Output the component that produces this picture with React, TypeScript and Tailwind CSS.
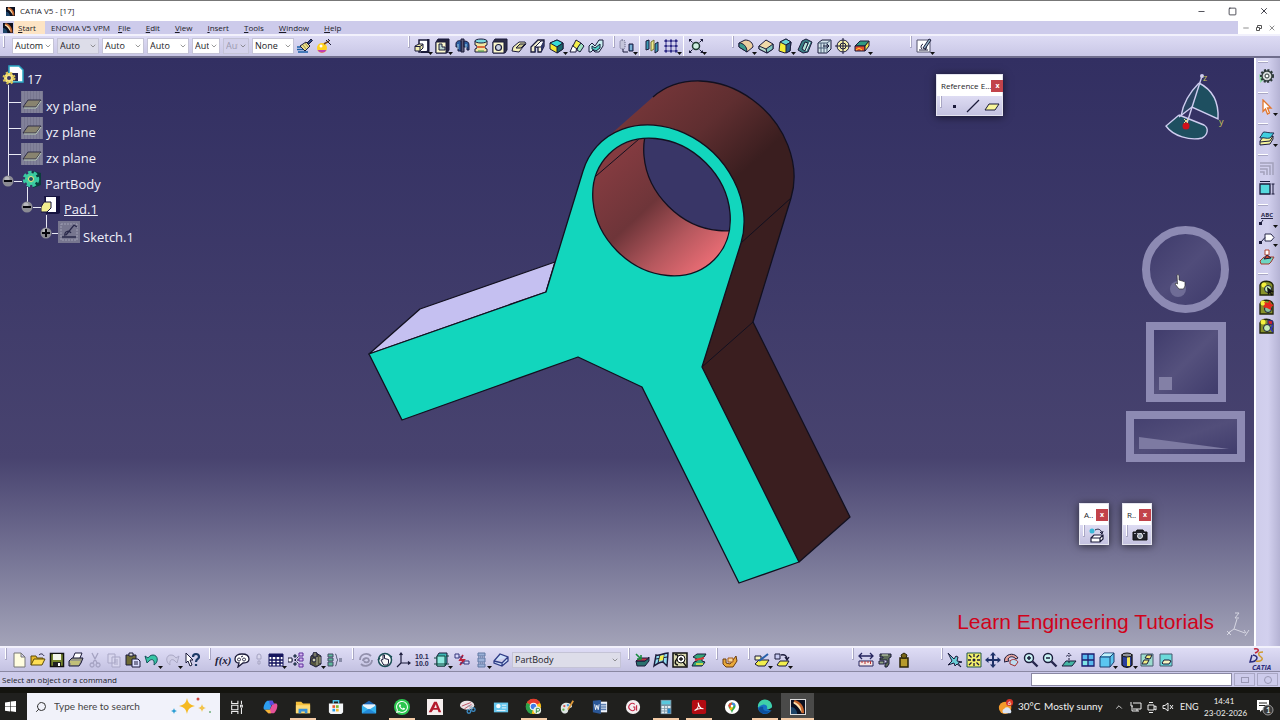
import type { ReactNode } from "react";
import { Minus, Square, X, Search, ChevronDown, ChevronUp } from "lucide-react";
import { SiWhatsapp } from "react-icons/si";

const K = "#1b1b3a";

// 16x16 glyphs for every toolbar
const GLYPHS: Record<string, ReactNode> = {
  brush: (
    <>
      <path d="M0 9h7M0 11.500h9M1 14h10" stroke="#1a5fa8" strokeWidth="1.300" />
      <path d="M3 8l6-4 4 4-5 5z" fill="#e9dd8b" stroke={K} />
      <path d="M6 7l3 4M8 5l3 4" stroke="#a39a4a" />
      <path d="M10 5l4-4 1.500 1.500L12 6z" fill="#2b4a86" stroke={K} />
    </>
  ),
  wizard: (
    <>
      <circle cx="6" cy="10" r="5" fill="#ffd21f" />
      <path d="M1.500 12a5 5 0 0 0 9 0z" fill="#c33fb0" />
      <circle cx="5" cy="8" r="1.500" fill="#fff" />
      <path d="M8 6l5-3" stroke="#7d4a1b" strokeWidth="1.500" />
      <path d="M10 2l5 5M12 1l2 2" stroke={K} />
    </>
  ),
  pad: (
    <>
      <path d="M5 2h9v11l-2 1H5z" fill="#fff" stroke={K} strokeWidth="1.500" />
      <path d="M13 2h1.500v12H7" stroke={K} strokeWidth="2" fill="none" />
      <path d="M1 8l4-2h4v4l-3 3H1z" fill="#f2efb0" stroke={K} />
      <path d="M6 9v4M1 8.500h5l3-2" stroke={K} fill="none" />
    </>
  ),
  pocket: (
    <>
      <path d="M2 4l2-3h11v11l-2 3H2z" fill="#23233f" stroke={K} />
      <path d="M2 4h10v11H2z" fill="#fbf8cc" stroke={K} />
      <path d="M5 6h3v3h3v3H5z" fill="#b9d4cf" stroke={K} />
    </>
  ),
  shaft: (
    <>
      <path d="M7 1h3v13H7z" fill="#5b5b78" stroke={K} />
      <path d="M2 6c0-3 3-4 5-3v10H4V9H2zM10 3c3 0 5 1 5 4v5h-2V9h-3z" fill="#2a5da0" stroke={K} />
      <path d="M4 6v5M12 6v4" stroke="#9fd4e9" />
    </>
  ),
  groove: (
    <>
      <path d="M2 3h12v4l-2 1v2l2 1v3H2v-3l2-1V8L2 7z" fill="#efe6a2" stroke={K} />
      <ellipse cx="8" cy="3" rx="6" ry="2" fill="#7ad8df" stroke={K} />
      <path d="M4 8h8v2H4z" fill="#d96b3e" />
      <path d="M5 13h6" stroke="#3a9a4a" />
    </>
  ),
  hole: (
    <>
      <path d="M1 4l2-3h12v11l-2 3H1z" fill="#2e2e46" stroke={K} />
      <path d="M1 4h11v11H1z" fill="#fbf8cc" stroke={K} />
      <circle cx="6.500" cy="9.500" r="3" fill="#ccd5e5" stroke={K} strokeWidth="1.200" />
    </>
  ),
  rib: (
    <>
      <path d="M1 13l1-4 6-5h6l1 2-3 3-4 5z" fill="#f3efb6" stroke={K} />
      <path d="M5 10l4-4h5l-4 4z" fill="#c9c58a" stroke={K} />
    </>
  ),
  slot: (
    <>
      <path d="M1 14V9l7-7h6v6l-3 6H8V9H5v5z" fill="#f3efd0" stroke={K} strokeWidth="1.300" />
      <path d="M5 9l6-6h3l-3 6H8z" fill="#fff" stroke={K} />
      <path d="M11 14V9l3-6v5zM5 14V9h1v5z" fill="#2d3568" />
    </>
  ),
  solid: (
    <>
      <path d="M1 5l7-3 6 3v6l-6 4-7-4z" fill="#f5e830" stroke={K} />
      <path d="M1 5l7-3 6 3-6 4z" fill="#37dcd7" stroke={K} />
      <path d="M8 9l6-4v6l-6 4z" fill="#17656b" stroke={K} />
    </>
  ),
  loft: (
    <>
      <path d="M1 14l3-7h4l-1 7z" fill="#fff" stroke={K} />
      <path d="M4 8l3-6 5 3-4 6z" fill="#f2ee4a" stroke={K} />
      <path d="M9 9l3-4 3 3-4 6-3-2z" fill="#9fe0c0" stroke={K} />
    </>
  ),
  loftCut: (
    <>
      <path d="M1 14V8l3-3 3 3 4-6h4v6l-4 6H7l-2-2-2 2z" fill="#c8eef0" stroke={K} />
      <path d="M4 8l3 2 5-4v4l-4 3-4-2z" fill="#4fd0c4" stroke={K} />
    </>
  ),
  translate: (
    <>
      <rect x="1" y="2" width="5" height="9" rx="2" fill="#c4c4da" stroke="#555577" strokeDasharray="1 1" />
      <path d="M4 11v3h5" stroke={K} fill="none" />
      <path d="M10 6h4v7h-4z" fill="#4b83b8" stroke={K} />
      <path d="M12 7v5" stroke="#a8dcec" />
    </>
  ),
  mirror: (
    <>
      <path d="M2 3l3-1v9l-3 1zM11 6l3-2v9l-3 2z" fill="#3b9ab5" stroke={K} />
      <path d="M7 4l3-2v9l-3 2z" fill="#ede98c" stroke="#777733" />
    </>
  ),
  pattern: (
    <>
      <path d="M3 1v14M8 1v14M13 1v14M1 3h14M1 8h14M1 13h14" stroke="#2f2b86" fill="none" />
      <path d="M2 2h2v2H2zM7 2h2v2H7zM12 2h2v2h-2zM2 7h2v2H2zM7 7h2v2H7zM12 7h2v2h-2zM2 12h2v2H2zM7 12h2v2H7zM12 12h2v2h-2z" fill="#2f2b86" />
    </>
  ),
  scale: (
    <>
      <circle cx="8" cy="8" r="3.500" fill="#cdeee0" stroke="#1b3a2f" strokeWidth="1.500" />
      <path d="M2 2l2.500 2.500M14 2l-2.500 2.500M2 14l2.500-2.500M14 14l-2.500-2.500" stroke={K} />
      <path d="M1 1h3L1 4zM15 1h-3l3 3zM1 15h3l-3-3zM15 15h-3l3-3z" fill={K} />
    </>
  ),
  fillet: (
    <>
      <path d="M1 5l6-3c5 0 8 3 8 7l-6 5-8-5z" fill="#edcfa0" stroke={K} />
      <path d="M1 5c4 0 8 3 8 9l-8-5z" fill="#3d9a8c" stroke={K} />
    </>
  ),
  chamfer: (
    <>
      <path d="M1 8l7-6 7 4v5l-6 4-8-4z" fill="#f0d9a8" stroke={K} />
      <path d="M8 11l7-5v5l-6 4z" fill="#7fc7c0" stroke={K} />
      <path d="M1 8l7 3 1 4-8-4z" fill="#b9dcc9" stroke={K} />
    </>
  ),
  draft: (
    <>
      <path d="M3 4l6-3 5 3-1 9-5 2-6-2z" fill="#f4ee35" stroke={K} />
      <path d="M3 4l6-3 5 3-5 3z" fill="#68d6d4" stroke={K} />
      <path d="M9 7l5-3-1 9-4 2z" fill="#2b5f8a" stroke={K} />
    </>
  ),
  shell: (
    <>
      <path d="M1 12l4-9 4-2 6 3-4 10-5 1z" fill="#3a7d83" stroke={K} />
      <path d="M5 11l3-7 3 1-3 8z" fill="#b2e2d6" stroke={K} />
      <path d="M9 13l4-9" stroke="#fff" />
    </>
  ),
  thickness: (
    <>
      <path d="M2 5l4-3h9v9l-4 4H2z" fill="#d3e3ea" stroke={K} />
      <path d="M2 5h9v10M11 5l4-3M5 5v10M8 5v10M2 10h9" stroke="#4a5f78" fill="none" />
      <path d="M7 8h6M11 6l2 2-2 2" stroke={K} fill="none" />
    </>
  ),
  thread: (
    <>
      <circle cx="8" cy="8" r="6" fill="#f5efaa" stroke={K} />
      <circle cx="8" cy="8" r="3" fill="none" stroke={K} />
      <path d="M8 0v16M0 8h16" stroke={K} />
    </>
  ),
  replace: (
    <>
      <path d="M1 8l5-5h9l-4 5z" fill="#2f9b82" stroke={K} />
      <path d="M1 8h10v5H1z" fill="#e8512a" stroke={K} />
      <path d="M11 8l4-5v5l-4 5z" fill="#f1e04c" stroke={K} />
      <path d="M2 12l3-2 3 2" stroke="#ffd83a" fill="none" />
    </>
  ),
  sketch: (
    <>
      <path d="M1 2h13v12H1z" fill="#fff" stroke="#55556e" />
      <path d="M3 12h9M6 11a3 3 0 0 1 1-5M10 8a3 3 0 0 1-1 4" stroke={K} fill="none" />
      <path d="M7 10l6-9 2 1-6 9z" fill="#96b6c8" stroke={K} />
    </>
  ),
  newFile: <path d="M3 1h7l4 4v10H3zM10 1v4h4" fill="#fffde0" stroke="#777" />,
  open: (
    <>
      <path d="M1 13V4h5l1 2h6v2" fill="#e9b928" stroke="#5c4b08" />
      <path d="M1 13l3-6h11l-3 6z" fill="#ffdf55" stroke="#5c4b08" />
      <path d="M9 3c2-2 4-1 5 1" stroke={K} fill="none" />
    </>
  ),
  save: (
    <>
      <path d="M1.500 1.500h13v13h-13z" fill="#76862d" stroke="#111" strokeWidth="1.500" />
      <path d="M4 2h8v6H4z" fill="#f4f5ea" />
      <path d="M4 10h8v4H4z" fill="#222" />
      <path d="M9 11h2v3H9z" fill="#fff" />
    </>
  ),
  print: (
    <>
      <path d="M5 6l2-5h7l-2 5" fill="#fff" stroke={K} />
      <path d="M1 9l3-3h11l-2 5-2 3H1z" fill="#9a9a86" stroke={K} />
      <path d="M2 10h10M3 12h8" stroke="#e8e46d" />
    </>
  ),
  cut: <path d="M5 1l5 10M11 1L6 11M5 11a2 2 0 1 0 .1 0M11 11a2 2 0 1 0 .1 0" stroke="#a5a3c2" strokeWidth="1.300" fill="none" />,
  copy: <path d="M2 2h7v9H2zM6 5h8v10H6zM8 8h4M8 10h4M8 12h4" stroke="#a9a7c6" fill="#d8d6ee" />,
  paste: (
    <>
      <path d="M1 3h10v10H1z" fill="#6d6a34" stroke={K} />
      <path d="M4 1h4v3H4z" fill="#ddd" stroke={K} />
      <path d="M7 7h6l2 2v6H7z" fill="#dce0ff" stroke={K} />
      <path d="M9 10h4M9 12h4" stroke={K} />
    </>
  ),
  undo: <path d="M1 4l2 7 2-2c3-3 6-1 5 4 5-3 4-10-1-10-3 0-4 2-5 3z" fill="#35c4a4" stroke="#14535b" />,
  redo: <path d="M15 4l-2 7-2-2c-3-3-6-1-5 4-5-3-4-10 1-10 3 0 4 2 5 3z" fill="#cfcde6" stroke="#aaa8c5" />,
  help: (
    <>
      <path d="M2 1l7 7H6l2 5-2 1-2-5-2 2z" fill="#fff" stroke={K} />
      <path d="M9 5c0-4 6-4 6 0 0 2-3 2-3 5M12 12v2" stroke="#1d3a66" strokeWidth="2.200" fill="none" />
    </>
  ),
  comment: (
    <>
      <path d="M8 2c5 0 7 2 7 5s-3 4-6 4l-5 4 1-4C2 11 1 9 1 7c0-3 3-5 7-5z" fill="#fff" stroke={K} strokeWidth="1.300" />
      <path d="M5 6a1.500 1.500 0 1 0 .1 0M10 6a1.500 1.500 0 1 0 .1 0M7 5l2-1" stroke={K} fill="none" />
    </>
  ),
  lock: <path d="M6 4a2 2 0 1 1 4 0v3H6zM7 9h2v3H7z" fill="#d9d7ee" stroke="#a5a3c2" />,
  table: (
    <>
      <path d="M1 2h14v12H1z" fill="#fff" stroke="#15155e" />
      <path d="M1 2h14v3H1z" fill="#15155e" />
      <path d="M1 8h14M1 11h14M4 5v9M8 5v9M12 5v9" stroke="#15155e" strokeWidth="1.400" />
    </>
  ),
  graph: (
    <>
      <path d="M3 8h8M7 8l5-5M7 8l5 5" stroke={K} fill="none" strokeDasharray="2 1" />
      <path d="M0 6h4v4H0z" fill="#fff" stroke={K} />
      <path d="M11 1h4v3h-4zM11 6h4v3h-4zM11 12h4v3h-4z" fill="#d9b9f3" stroke="#5d2c9a" />
      <path d="M6 3h2v2H6zM6 11h2v2H6z" fill="#4fb0a0" stroke={K} />
    </>
  ),
  law: (
    <>
      <path d="M4 4l5-3 5 3v8l-5 3-6-3z" fill="#55553f" stroke={K} />
      <path d="M6 2a2 2 0 0 1 4 0v3H6z" fill="#777766" stroke={K} />
      <circle cx="7" cy="8" r="2" fill="#cfcfb0" stroke={K} />
      <path d="M10 5v8M13 5v6" stroke="#b0b096" />
    </>
  ),
  brace: (
    <>
      <path d="M1 2h5v3H1zM1 6h5v3H1zM1 10h5v4H1z" fill="#5fb79c" stroke="#444c66" />
      <path d="M8 2c2 0 1 5 3 6-2 1-1 6-3 6M12 7h3M12 9h3" stroke="#444c66" fill="none" />
    </>
  ),
  update: <path d="M13 4C9 0 2 2 2 8M3 12c4 4 11 1 11-4M5 9c0-3 5-4 6-1M11 8c0 3-4 3-5 1" stroke="#9391ad" strokeWidth="1.800" fill="none" />,
  manual: (
    <>
      <circle cx="8" cy="8" r="6.500" fill="#fff" stroke="#1a4f55" strokeWidth="1.500" />
      <path d="M6 12l-2-4 2-.5V3h1.500v3.500l4 1V11l-1 2H7z" fill="#f8f8f8" stroke={K} />
      <path d="M1 8l2-2M13 4l2 1" stroke="#1a4f55" strokeWidth="1.500" />
    </>
  ),
  axis: <path d="M5 1v10h9M5 11l-4 4M3.500 3L5 1l1.500 2M12 9.500l2 1.500-2 1.500" stroke={K} strokeWidth="1.200" fill="none" />,
  body: (
    <>
      <path d="M3 4l2-3h8v10l-2 3H3z" fill="#3cb6b3" stroke={K} />
      <path d="M3 4h8v10H3z" fill="#8eeadf" stroke="#11453f" />
      <path d="M0 6h3M0 12h15M12 4h3" stroke="#11453f" />
    </>
  ),
  link: (
    <>
      <path d="M1 2h4v4H1zM10 9h5v3h-5z" fill="#d6d8fb" stroke="#34347a" />
      <path d="M9 3L6 8h4l-4 5" stroke="#c0203a" strokeWidth="1.800" fill="none" />
      <path d="M5 5h4M6 11h4" stroke="#34347a" />
    </>
  ),
  stack: (
    <>
      <path d="M5 1h7v3H5zM5 6h7v4H5zM5 12h7v3H5z" fill="#9ab0d7" stroke="#6178a3" />
      <path d="M5 5h7M5 11h7" stroke="#6178a3" strokeDasharray="1 1" />
    </>
  ),
  box: <path d="M1 9l6-7 8 3v4l-6 5-8-3zM1 9l8 2 6-6M9 11v3" fill="#cfe0fa" stroke="#2f3c86" strokeWidth="1.300" />,
  analysis: (
    <>
      <path d="M2 9h9l4-4v4l-4 5H3z" fill="#29706d" stroke={K} />
      <path d="M2 9l4-3h9l-4 3z" fill="#c2344a" stroke={K} />
      <path d="M2 2l5 5M7 3v4H3" stroke="#188a3f" strokeWidth="1.600" fill="none" />
    </>
  ),
  surface: (
    <>
      <path d="M3 3c3 1 5-1 12-2l-1 13-4-4c-3 0-5 1-9 4z" fill="#8fdcf0" stroke={K} strokeWidth="1.400" />
      <path d="M7 3l-2 8M11 2l-1 8M3 7l11-2" stroke={K} fill="none" />
      <path d="M7 4l4-1-1 5-4 1z" fill="#f2ee4a" />
    </>
  ),
  inspect: (
    <>
      <path d="M1 1h14v14H1z" fill="#d9d9ae" stroke="#111" strokeWidth="1.500" />
      <path d="M3 3c2-2 4 2 2 4s-3 5 1 6" stroke="#111" fill="none" strokeWidth="1.500" />
      <circle cx="9" cy="7" r="4" fill="#fff" stroke="#111" />
      <path d="M7 7h4M9 5v4M11 10l3 4" stroke="#111" strokeWidth="1.300" />
    </>
  ),
  curvature: (
    <>
      <path d="M2 5l4-3h9l-2 3-2 1v3l3 1-3 4H1l2-4 3-1V7z" fill="#31a57a" stroke={K} />
      <path d="M4 8l9-2" stroke="#d83d38" strokeWidth="2" />
      <path d="M5 12h7" stroke="#f6ec43" strokeWidth="1.500" />
    </>
  ),
  catalog: (
    <>
      <path d="M1 7h3v4l4 1 6-8 1 5-4 6H4l-3-3z" fill="#e9a93a" stroke="#6b3d10" />
      <path d="M6 6h5v4H6z" fill="#f6d79a" stroke="#a65b19" />
    </>
  ),
  planes: (
    <>
      <path d="M1 12l4-4h10l-4 6H4z" fill="#f2ee4e" stroke={K} />
      <path d="M1 4h6v4H1z" fill="#f8f6b4" stroke={K} />
      <path d="M5 9l9-7" stroke="#2860aa" strokeWidth="2" />
    </>
  ),
  planesArrow: (
    <>
      <path d="M3 13l3-4h9l-3 5H5z" fill="#f2ee4e" stroke={K} />
      <path d="M1 2h5v5H1z" fill="#c9ccf3" stroke={K} />
      <path d="M7 3c4-1 6 1 6 4M11 5l2 3 2-3" stroke={K} fill="none" strokeWidth="1.300" />
    </>
  ),
  measure: (
    <>
      <path d="M1 4h14M4 1L1 4l3 3M12 1l3 3-3 3" stroke="#25255e" fill="none" strokeWidth="1.300" />
      <path d="M1 9h14v5H1z" fill="#f9e6e2" stroke="#25255e" />
      <path d="M4 9v2M7 9v3M10 9v2M12.500 9v3" stroke="#b33" />
    </>
  ),
  caliper: (
    <>
      <path d="M3 2h11v3l-2 1v6l-2 3H8v-4h2V8H3V6h3V5H3z" fill="#5d6c58" stroke={K} />
      <path d="M2 9h5v3H2z" fill="#8ea284" stroke={K} />
      <path d="M5 3h6" stroke="#d6e2c1" />
    </>
  ),
  weight: (
    <>
      <path d="M4 6h8v9H4z" fill="#b79b2d" stroke="#2b2509" strokeWidth="1.500" />
      <path d="M6 6l-1-3 3-2 3 2-1 3z" fill="#776517" stroke="#2b2509" />
    </>
  ),
  fly: <path d="M1 1l6 6 2-3 2 1-1 4 5 1-4 1 3 4-4-3-2 2-1-3-6 2 4-4z" fill="#69cdd6" stroke={K} />,
  fit: (
    <>
      <path d="M1 1h14v14H1z" fill="#f3f06a" stroke="#20564c" />
      <circle cx="8" cy="8" r="1.500" fill={K} />
      <path d="M3 3l2.500 2.500M13 3l-2.500 2.500M3 13l2.500-2.500M13 13l-2.500-2.500M8 2v3M8 11v3M2 8h3M11 8h3" stroke={K} strokeWidth="1.300" />
    </>
  ),
  pan: <path d="M8 0l3 3.500H9V7h3.500V5L16 8l-3.500 3V9H9v3.500h2L8 16l-3-3.500h2V9H3.500v2L0 8l3.500-3v2H7V3.500H5z" fill="#1e3168" />,
  rotate: (
    <>
      <path d="M1 6c3-5 10-5 13 0l-2 1c-3-3-6-3-8 0l1 2-5 1z" fill="#e5a39b" stroke={K} />
      <path d="M6 9c3-3 7-1 8 1l-3 4-5-2z" fill="#bcdcf0" stroke="#a03030" />
    </>
  ),
  zoomIn: (
    <>
      <circle cx="6" cy="6" r="4.500" fill="#c8f3f3" stroke={K} strokeWidth="1.400" />
      <path d="M4 6h4M6 4v4" stroke={K} strokeWidth="1.500" />
      <path d="M9.500 9.500l5 5" stroke="#26264e" strokeWidth="2.400" />
    </>
  ),
  zoomOut: (
    <>
      <circle cx="6" cy="6" r="4.500" fill="#c8f3f3" stroke={K} strokeWidth="1.400" />
      <path d="M4 6h4" stroke={K} strokeWidth="1.500" />
      <path d="M9.500 9.500l5 5" stroke="#26264e" strokeWidth="2.400" />
    </>
  ),
  normal: (
    <>
      <path d="M1 14l4-5h10l-4 5z" fill="#45b6a4" stroke={K} />
      <path d="M8 11V2M5.500 4.500L8 1l2.500 3.500" stroke={K} fill="none" strokeDasharray="2 1" />
    </>
  ),
  multi: (
    <>
      <path d="M2 2h12v12H2z" fill="#58b9ef" stroke="#1d1d6e" strokeWidth="1.300" />
      <path d="M3 8h5v5H3z" fill="#7fe6e6" />
      <path d="M8 2v12M2 8h12" stroke="#1d1d6e" strokeWidth="1.300" />
    </>
  ),
  iso: (
    <>
      <path d="M1 5l4-4h10v9l-4 5H1z" fill="#5bc6f0" stroke="#1d3c6e" />
      <path d="M1 5h10v10M11 5l4-4" stroke="#1d3c6e" fill="none" />
      <path d="M2 4l3-2.500h9L11 4z" fill="#c5f2fa" />
    </>
  ),
  shading: (
    <>
      <path d="M3 3v10c2 3 8 3 10 0V3z" fill="#2b3f9d" stroke="#111" strokeWidth="1.300" />
      <path d="M8 5h3v9H8z" fill="#f3e75a" />
      <ellipse cx="8" cy="3" rx="5" ry="2" fill="#92949c" stroke="#111" />
    </>
  ),
  hide: (
    <>
      <path d="M2 2h12v12H2z" fill="#9cdccf" stroke="#46566c" />
      <path d="M3 12l2-4h5l-2 4zM6 6l2-3h5l-2 4z" fill="#f1ee83" stroke={K} />
    </>
  ),
  swap: (
    <>
      <path d="M2 2h12v12H2z" fill="#6bdada" stroke="#46566c" />
      <path d="M4 11l2-3h5l2 1-2 3H5z" fill="#f5f3c0" stroke={K} />
    </>
  ),
  gear: (
    <>
      <path d="M0 6l6 5-5 4z" fill="#8fdca6" />
      <circle cx="8" cy="8" r="6" fill="none" stroke="#2c3838" strokeWidth="2" strokeDasharray="2 1.500" />
      <circle cx="8" cy="8" r="5" fill="#d5d9d9" stroke="#2c3838" strokeWidth="1.300" />
      <circle cx="8" cy="8" r="2" fill="#fff" stroke="#2c3838" />
    </>
  ),
  arrow: <path d="M4 1l8 8H8.500l2 5-2 1-2-5L4 12.500z" fill="#fff" stroke="#e2762c" strokeWidth="1.300" />,
  layers: (
    <>
      <path d="M1 11l3-4 10-1v3l-3 5-10 1z" fill="#f4f29a" stroke={K} />
      <path d="M1 12l10-1 3-5" stroke={K} fill="none" />
      <path d="M1 7c2-1 2-5 4-5s5 1 10 1l-4 5c-4 1-6-1-10 0z" fill="#3fcfe0" stroke="#235" />
    </>
  ),
  dimGrey: <path d="M1 2h13v12M1 5h10v9M1 8h7v6M1 11h4v3" stroke="#a3a1ba" strokeWidth="1.500" fill="none" />,
  dim: (
    <>
      <path d="M1 4h10v10H1z" fill="#55d8dd" stroke={K} strokeWidth="1.300" />
      <path d="M1 1.500h10M14 4v10M12.500 4h3M12.500 14h3" stroke={K} />
    </>
  ),
  flag: (
    <>
      <path d="M6 4h6l3 3.500-3 3.500H6z" fill="#fff" stroke="#28284a" />
      <path d="M6 7.500L2 12" stroke={K} />
      <path d="M0 11h3v3H0z" fill={K} />
    </>
  ),
  stamp: (
    <>
      <path d="M1 12l4-4h10l-3 5-2 2H2z" fill="#6ed5c2" stroke="#a43a2b" />
      <path d="M6 1h4v5H6z" fill="#fff" stroke="#b0432f" />
      <path d="M5 10l3-4 4 3z" fill="#d0492f" stroke={K} />
    </>
  ),
  apply1: (
    <>
      <path d="M1 5c2-5 11-5 13 0v10H1z" fill="#87932a" stroke="#22260a" strokeWidth="1.400" />
      <circle cx="5" cy="5" r="2.500" fill="#f5f13d" />
      <circle cx="9" cy="9" r="3.500" fill="#c4edb8" stroke={K} />
      <path d="M8 7l7 5-3 .5L14 15l-2 .5-1-2.500-2 2z" fill="#111" />
    </>
  ),
  apply2: (
    <>
      <path d="M1 5c2-5 11-5 13 0v10H1z" fill="#87932a" stroke="#22260a" strokeWidth="1.400" />
      <circle cx="4" cy="4" r="2.500" fill="#f5f13d" />
      <circle cx="9" cy="10" r="3.500" fill="#8ac29c" stroke={K} />
      <path d="M4 8l2-3-1-2 4 1 2-3 1 4 3 1-3 2v3l-4-2z" fill="#e3281f" />
    </>
  ),
  apply3: (
    <>
      <path d="M1 5c2-5 11-5 13 0v10H1z" fill="#87932a" stroke="#22260a" strokeWidth="1.400" />
      <circle cx="4" cy="4" r="2.500" fill="#f5f13d" />
      <circle cx="8" cy="10" r="3.500" fill="#c4edb8" stroke={K} />
      <path d="M9 2l5 1-1 4-4-1z" fill="#c8242c" stroke="#222a80" />
      <path d="M14 7l-2 4 2 3" stroke="#3236b0" strokeWidth="1.800" />
    </>
  ),
  point: <path d="M7 7h3v3H7z" fill={K} />,
  line: <path d="M2 14L14 2" stroke={K} strokeWidth="1.300" />,
  plane: <path d="M1 12l4-6h10l-4 6z" fill="#f8f59a" stroke={K} />,
  axisBox: (
    <>
      <circle cx="3" cy="4" r="2.500" fill="#39b8d8" />
      <path d="M6 3c4-2 6 0 7 3M11 5l2 2 1-3" stroke={K} fill="none" />
      <path d="M2 11l3-3h9v4l-3 3H2zM2 11h9v4M11 11l3-3" fill="#fff" stroke={K} strokeWidth="1.200" />
    </>
  ),
  camera: (
    <>
      <path d="M1 5h3l1-2h6l1 2h3v8H1z" fill="#20222a" stroke="#111" />
      <path d="M2 6.500h12" stroke="#aab" strokeDasharray="2 1" />
      <circle cx="8" cy="9" r="2.500" fill="#8f9baa" stroke="#eee" />
    </>
  ),
};

function Glyph({ name }: { name: string }) {
  return (
    <svg viewBox="0 0 16 16" className="block h-4 w-4 shrink-0" fill="none">
      {GLYPHS[name]}
    </svg>
  );
}

const NARROW = ["comment", "lock"];

// names ending with "+" carry a drop-down marker
function Tool({ id }: { id: string }) {
  const drop = id.endsWith("+");
  const name = drop ? id.slice(0, -1) : id;
  const width = drop ? "w-5" : NARROW.includes(name) ? "w-[17px]" : "w-[19px]";
  return (
    <button aria-label={name} className={`relative flex h-4 shrink-0 ${width}`}>
      {name === "fx" && <span className="font-['Liberation_Serif',serif] text-[11px] leading-4 font-bold text-[#1b1b3a] italic">f(x)</span>}
      {name === "num" && (
        <span className="pt-px font-['Liberation_Sans',sans-serif] text-[7px] leading-[7px] font-bold text-[#26264e]">
          10.1
          <br />
          10.0
        </span>
      )}
      {GLYPHS[name] && <Glyph name={name} />}
      {drop && <DropMark />}
    </button>
  );
}

function DropMark() {
  return (
    <svg viewBox="0 0 5 3" className="absolute right-px -bottom-px h-[3px] w-[5px]">
      <path d="M0 0h5L2.500 3z" fill="#111" />
    </svg>
  );
}

function Tools({ ids }: { ids: string }) {
  return (
    <div className="flex shrink-0">
      {ids.split(" ").map((id) => (
        <Tool key={id} id={id} />
      ))}
    </div>
  );
}

function Handle() {
  return <div className="mr-1 h-3 w-[2px] shrink-0 self-start border-r border-b border-[#a9a7c4] bg-white" />;
}

function Divider() {
  return <div className="mr-1 h-full w-px shrink-0 bg-white" />;
}

function Picker({ label, value, className }: { label: string; value: string; className: string }) {
  return (
    <div className={`relative h-4 shrink-0 ${className}`}>
      <select aria-label={label} className="block h-full w-full appearance-none overflow-hidden border border-[#c4c3d6] bg-inherit pr-[10px] pl-[2px] text-[9px] leading-3">
        <option>{value}</option>
      </select>
      <ChevronDown className="pointer-events-none absolute top-1 right-[2px] h-2 w-2 text-[#666]" />
    </div>
  );
}

const MENU = ["File", "Edit", "View", "Insert", "Tools", "Window", "Help"];

function AppLogo({ className }: { className: string }) {
  return (
    <svg viewBox="0 0 16 16" className={className}>
      <rect width="16" height="16" fill="#0b1020" />
      <path d="M4 0c7 2 11 7 11 15h-3C11 9 8 5 3 3z" fill="#c4642c" />
      <path d="M3 2c6 2 9 6 9 12C9 9 7 6 3 4z" fill="#ffe2ae" />
      <path d="M0 8c4 0 7 4 7 8H0z" fill="#1d4468" />
    </svg>
  );
}

function Model() {
  return (
    <svg viewBox="0 58 1254 588" className="absolute inset-0 h-full w-full" fill="none">
      <defs>
        <linearGradient id="outer" gradientUnits="userSpaceOnUse" x1="640" y1="95" x2="740" y2="205">
          <stop offset="0" stopColor="#763639" />
          <stop offset="0.450" stopColor="#5f2e30" />
          <stop offset="0.850" stopColor="#3a1e1f" />
        </linearGradient>
        <linearGradient id="bore" gradientUnits="userSpaceOnUse" x1="612" y1="160" x2="712" y2="268">
          <stop offset="0" stopColor="#843b40" />
          <stop offset="0.400" stopColor="#6e3539" />
          <stop offset="0.700" stopColor="#b4575d" />
          <stop offset="1" stopColor="#ef6f77" />
        </linearGradient>
        <clipPath id="boreClip">
          <ellipse cx="661.500" cy="207" rx="74.500" ry="62.500" transform="rotate(45 661.500 207)" />
        </clipPath>
      </defs>
      <g stroke="#12101f" strokeWidth="1.300" strokeLinejoin="round">
        <path d="M602 142L653 97A88.500 74 45 0 1 791 198L753 322L850 517L799 562L702 367L661 207z" fill="url(#outer)" stroke="none" />
        <path d="M653 97A88.500 74 45 0 1 791 198L753 322L850 517L799 562" />
        <path d="M741 243L791 198M702 367L753 322" strokeWidth="1" />
        <path d="M369 354L420 309L555 262L546 292z" fill="#c5c0f1" />
        <path
          d="M369 354L546 292L583 171A88.500 74 45 0 1 741 243L702 367L799 562L739 583L642 387L578 357L402 420z"
          fill="#12d6bd"
        />
        <g clipPath="url(#boreClip)">
          <rect x="585" y="130" width="155" height="155" fill="url(#bore)" stroke="none" />
          <ellipse cx="712.500" cy="162" rx="74.500" ry="62.500" transform="rotate(45 712.500 162)" fill="#393667" />
          <path d="M596 176L646 133" strokeWidth="1" />
        </g>
        <ellipse cx="661.500" cy="207" rx="74.500" ry="62.500" transform="rotate(45 661.500 207)" />
      </g>
    </svg>
  );
}

const PLANES = ["xy plane", "yz plane", "zx plane"];

function PlaneIcon() {
  return (
    <svg viewBox="0 0 22 22" className="h-[22px] w-[22px] shrink-0">
      <rect width="22" height="22" fill="#77768f" />
      <path d="M2 0v22M5 0v22M8 0v22M11 0v22M14 0v22M17 0v22M20 0v22" stroke="#8d8ca3" />
      <path d="M2 16l5-7h13l-5 7z" fill="#88836f" stroke="#302f48" />
      <path d="M3 17h12l5-7" fill="none" stroke="#b8c9b4" />
    </svg>
  );
}

function Knob({ open }: { open: boolean }) {
  return (
    <svg viewBox="0 0 12 12" className="h-3 w-3 shrink-0">
      <circle cx="6" cy="6" r="5.500" fill="#8b8b93" />
      <circle cx="5" cy="4" r="2.500" fill="#b7b7bd" />
      <path d={open ? "M2 6h8" : "M2 6h8M6 2v8"} stroke="#05050c" strokeWidth="2" />
    </svg>
  );
}

function SpecTree() {
  return (
    <div className="absolute top-[7px] left-[2px] text-[13px] leading-[18px] text-[#f1f1fa]">
      <span className="absolute top-5 left-[6px] h-24 w-px bg-[#e8e8f4]" />
      <span className="absolute top-[122px] left-[25px] h-5 w-px bg-[#e8e8f4]" />
      <span className="absolute top-[150px] left-[44px] h-4 w-px bg-[#e8e8f4]" />
      <div className="relative flex h-[26px] items-start">
        <svg viewBox="0 0 22 20" className="h-5 w-[22px] shrink-0">
          <path d="M7 1h10l4 4v12H7z" fill="#fff" stroke="#2ba8c4" strokeWidth="1.500" />
          <path d="M10 8h6v8h-6z" fill="#26264e" />
          <circle cx="7" cy="13" r="5" fill="#f7e483" stroke="#d9c455" strokeWidth="3" strokeDasharray="2 2" />
          <circle cx="7" cy="13" r="2" fill="#3b3867" />
        </svg>
        <span className="pt-[5px] pl-[3px]">17</span>
      </div>
      {PLANES.map((name) => (
        <div key={name} className="flex h-[26px] items-start">
          <span className="mt-[11px] ml-[7px] h-px w-3 bg-[#e8e8f4]" />
          <PlaneIcon />
          <span className="pt-[6px] pl-[3px]">{name}</span>
        </div>
      ))}
      <div className="relative flex h-[26px] items-start">
        <span className="mt-[6px]">
          <Knob open />
        </span>
        <span className="mt-3 h-px w-2 bg-[#e8e8f4]" />
        <svg viewBox="0 0 20 20" className="h-5 w-5 shrink-0">
          <path d="M10 2l9 2v12l-8 3z" fill="#0b3d3c" />
          <circle cx="9" cy="10" r="6" fill="#47d69d" stroke="#39c9a2" strokeWidth="4.500" strokeDasharray="3 2" />
          <circle cx="9" cy="10" r="2.500" fill="#1b4b60" stroke="#f1e681" />
        </svg>
        <span className="pt-[6px] pl-[3px]">PartBody</span>
      </div>
      <div className="relative flex h-[26px] items-start pl-[19px]">
        <span className="mt-[6px]">
          <Knob open />
        </span>
        <span className="mt-3 h-px w-2 bg-[#e8e8f4]" />
        <svg viewBox="0 0 20 20" className="h-5 w-5 shrink-0">
          <path d="M3 1h16v17l-2 1H5z" fill="#15123f" />
          <path d="M5 2h10v15H5z" fill="#fff" />
          <path d="M0 12l3-5h7v6l-4 4H0z" fill="#f2ee8f" stroke="#15123f" />
        </svg>
        <span className="pt-[5px] pl-[3px] underline">Pad.1</span>
      </div>
      <div className="relative flex h-[26px] items-start pl-[38px]">
        <span className="mt-[6px]">
          <Knob open={false} />
        </span>
        <span className="mt-3 h-px w-[6px] bg-[#e8e8f4]" />
        <svg viewBox="0 0 22 22" className="h-[22px] w-[22px] shrink-0">
          <rect width="22" height="22" fill="#77768f" />
          <path d="M3 3h16v16H3z" stroke="#a09fb4" fill="none" strokeDasharray="2 1" />
          <path d="M4 16h14M7 15c-1-5 4-6 6-3M8 14l8-10 3 2" stroke="#29284a" strokeWidth="1.300" fill="none" />
        </svg>
        <span className="pt-[7px] pl-[3px]">Sketch.1</span>
      </div>
    </div>
  );
}

function Compass() {
  return (
    <svg viewBox="1160 70 68 72" className="absolute top-3 right-[26px] h-[72px] w-[68px]" fill="none">
      <path d="M1199 83C1211 89 1219 101 1218 119L1192 107z" fill="#1e4f60" />
      <path d="M1199 83C1190 92 1183 104 1181 116L1192 107z" fill="#2b4563" />
      <path d="M1179 115L1166 126C1173 136 1190 141 1202 138C1208 135 1209 128 1204 125z" fill="#1e4f60" />
      <g stroke="#cfcdf0" strokeWidth="1.400">
        <path d="M1199 83C1211 89 1219 101 1218 119L1192 107L1179 117" />
        <path d="M1199 83C1190 92 1183 104 1181 116" />
        <path d="M1179 115L1166 126C1173 136 1190 141 1202 138C1208 135 1209 128 1204 125L1179 115" />
        <path d="M1202 76L1187 123" />
      </g>
      <circle cx="1202" cy="76" r="2" fill="#cfcdf0" />
      <circle cx="1186" cy="126" r="3.500" fill="#d0101a" />
      <path d="M1184 119l4 4M1188 119l-4 4" stroke="#e5d98a" />
      <text x="1203" y="81" className="fill-[#c9c455] text-[9px]">z</text>
      <text x="1219" y="125" className="fill-[#c9c455] text-[9px]">y</text>
    </svg>
  );
}

function TouchPads() {
  return (
    <div className="absolute top-[168px] right-[9px] flex flex-col items-center gap-[9px]">
      <div className="relative h-[87px] w-[87px] rounded-full border-8 border-[#8d8ab3] bg-linear-to-br from-[#3e3a6b] via-[#504c7a] to-[#3e3a6b]">
        <span className="absolute bottom-2 left-5 h-4 w-4 rounded-full bg-[#6f6c96]" />
        <svg viewBox="0 0 12 16" className="absolute top-10 left-6 h-4 w-3">
          <path d="M3 1c1-.6 2 0 2 1v4l5 1.500 1 1V12l-1.500 3H5L1 10l1-1 1.500 1z" fill="#fff" stroke="#333" strokeWidth="0.700" />
        </svg>
      </div>
      <div className="relative h-20 w-20 border-8 border-[#8d8ab3] bg-linear-to-br from-[#403c6c] via-[#55517d] to-[#403c6c]">
        <span className="absolute bottom-1 left-[5px] h-[13px] w-[13px] bg-[#8380a6]" />
      </div>
      <div className="flex h-[51px] w-[119px] items-end border-8 border-[#8d8ab3] bg-linear-to-br from-[#454170] via-[#524e7a] to-[#403c6c]">
        <svg viewBox="0 0 103 35" className="w-full">
          <path d="M5 18L95 30H5z" fill="#7d7aa2" />
        </svg>
      </div>
    </div>
  );
}

function Palette({ title, ids, className }: { title: string; ids: string; className: string }) {
  return (
    <section className={`absolute border border-[#e4e4ee] bg-white shadow-[0_1px_8px_rgba(0,0,0,0.6)] ${className}`}>
      <header className="flex h-[21px] items-center justify-between pl-1 text-[8px]">
        <span className="whitespace-nowrap">{title}</span>
        <button aria-label="Close" className="flex h-3 w-3 shrink-0 items-center justify-center bg-[#c2434b] text-[7px] leading-3 font-bold text-white">
          x
        </button>
      </header>
      <div className="flex h-[19px] items-center bg-linear-to-b from-[#dedcf3] to-[#c4c2e0] pl-[3px]">
        <Handle />
        <Tools ids={ids} />
      </div>
    </section>
  );
}

const SIDE: string[][] = [["gear"], ["arrow+"], ["layers+"], ["dimGrey", "dim"], ["abc+", "flag+", "stamp"], ["apply1", "apply2", "apply3"]];

function AbcLabel() {
  return (
    <span className="relative block h-4 w-4">
      <span className="absolute top-0 left-[2px] text-[6px] leading-[9px] font-bold text-[#28284a] underline">ABC</span>
      <svg viewBox="0 0 16 16" className="absolute inset-0 h-4 w-4">
        <path d="M4 9l-3 4" stroke={K} />
        <path d="M0 11h3v3H0z" fill={K} />
      </svg>
    </span>
  );
}

function SideBar() {
  return (
    <aside className="flex w-[26px] shrink-0 flex-col gap-2 border-l-2 border-white bg-linear-to-r from-[#cfcdeb] via-[#d2d0ee] to-[#b5b3d4] pt-[3px]">
      {SIDE.map((group) => (
        <div key={group[0]}>
          <span className="mb-[5px] ml-[2px] block h-[2px] w-[10px] border-b border-[#a9a7c4] bg-white" />
          <div className="flex flex-col gap-[3px]">
            {group.map((id) => (
              <button key={id} aria-label={id.replace("+", "")} className="relative flex h-4 w-[23px] pl-[3px]">
                {id === "abc+" ? <AbcLabel /> : <Glyph name={id.replace("+", "")} />}
                {id.endsWith("+") && <DropMark />}
              </button>
            ))}
          </div>
        </div>
      ))}
    </aside>
  );
}

const BARS = ["newFile open save print cut copy paste undo+ redo+ help", "fx comment lock table+ graph law+ brace"];

function BottomTools() {
  return (
    <div className="flex h-[26px] shrink-0 items-center overflow-hidden border-t-2 border-b border-t-[#f2f1fc] border-b-[#8a88a3] bg-linear-to-b from-[#dedcf5] to-[#c4c2e2] pl-[5px]">
      {BARS.map((ids) => (
        <div key={ids} className="mr-[6px] flex items-center self-stretch">
          <Handle />
          <Tools ids={ids} />
        </div>
      ))}
      <Handle />
      <Tools ids="update manual axis num body+ link stack+ box" />
      <Picker label="Current body" value="PartBody" className="mr-[7px] w-[109px] bg-[#dddde9]" />
      <Handle />
      <Tools ids="analysis surface inspect curvature" />
      <div className="w-[6px]" />
      <Handle />
      <Tools ids="catalog" />
      <div className="w-[7px]" />
      <Handle />
      <Tools ids="planes+ planesArrow+" />
      <div className="w-[58px]" />
      <Handle />
      <Tools ids="measure caliper weight" />
      <div className="w-[26px]" />
      <Handle />
      <Tools ids="fly fit pan rotate zoomIn zoomOut normal multi iso+ shading+ hide swap" />
      <svg viewBox="0 0 28 24" className="mr-1 ml-auto h-6 w-7 shrink-0" fill="none">
        <path d="M6 1c5-1 6 2 1 4" stroke="#c0273c" strokeWidth="1.500" />
        <path d="M4 7l-2 7c7 0 10-6 3-7" stroke="#2b2b7c" strokeWidth="1.500" />
        <path d="M15 4c-6 0-5 3-2 5s0 5-5 4" stroke="#d09a2c" strokeWidth="1.500" />
        <text x="4" y="22" className="fill-[#2b2b7c] text-[7px] font-bold italic">CATIA</text>
      </svg>
    </div>
  );
}

const APPS: { id: string; open?: boolean; active?: boolean; art: ReactNode }[] = [
  {
    id: "Task View",
    art: <path d="M3 2v3h7V2M3 7h7v5H3zM3 17v-3h7v3M14 2v4M14 10v7M13 7h2v2h-2z" stroke="#eee" fill="none" strokeWidth="1.200" />,
  },
  {
    id: "Copilot",
    art: (
      <>
        <path d="M6 2h6l-3 10H3C0 12 3 3 6 2z" fill="#2c9df0" />
        <path d="M12 5h4c3 1 0 10-3 11H7z" fill="#e6529a" />
        <path d="M8 2h4l2 4-5 1z" fill="#5a4be0" />
        <path d="M3 12h6l1 4H7z" fill="#f5b53a" />
      </>
    ),
  },
  {
    id: "File Explorer",
    open: true,
    art: (
      <>
        <path d="M1 3h6l2 2h8v11H1z" fill="#f5bf3c" />
        <path d="M1 7h16v9H1z" fill="#ffdb74" />
        <path d="M4 11h10v5h-3v-2H7v2H4z" fill="#3a92d8" />
      </>
    ),
  },
  {
    id: "Microsoft Store",
    art: (
      <>
        <path d="M6 5V2h6v3" stroke="#4cc2ea" fill="none" strokeWidth="1.500" />
        <path d="M1 5h16v10l-2 2H3l-2-2z" fill="#f4f6f8" />
        <path d="M5 7h3v3H5z" fill="#e8562a" />
        <path d="M9 7h3v3H9z" fill="#7bb82a" />
        <path d="M5 11h3v3H5z" fill="#2a9de8" />
        <path d="M9 11h3v3H9z" fill="#f5b92a" />
      </>
    ),
  },
  {
    id: "Mail",
    art: (
      <>
        <path d="M1 7l8-5 8 5v9H1z" fill="#1a64b4" />
        <path d="M2 6h14v6H2z" fill="#e9f4fb" />
        <path d="M1 7l8 5 8-5v9H1z" fill="#35b3ef" />
        <path d="M1 16l8-5 8 5z" fill="#2388d8" />
      </>
    ),
  },
  { id: "WhatsApp", open: true, art: null },
  {
    id: "AutoCAD",
    art: (
      <>
        <rect width="18" height="18" fill="#f5eeee" />
        <path d="M2 15L8 3h3l5 12h-3l-1-3H7l-2 3zM8 10h3l-1-4z" fill="#b3192b" />
      </>
    ),
  },
  {
    id: "Snipping Tool",
    art: (
      <>
        <ellipse cx="8" cy="7" rx="8" ry="5" fill="#ece4e6" />
        <path d="M2 8l10-4M5 11l8-5" stroke="#b34456" />
        <circle cx="10" cy="14" r="2" stroke="#3c8bc4" strokeWidth="1.500" fill="none" />
        <circle cx="15" cy="12" r="2" stroke="#3c8bc4" strokeWidth="1.500" fill="none" />
        <path d="M9 7l5 4M14 7l-4 5" stroke="#aab4c0" strokeWidth="1.200" />
      </>
    ),
  },
  {
    id: "Control Panel",
    art: (
      <>
        <path d="M1 4h16v11H1z" fill="#66c7ee" />
        <circle cx="6" cy="8" r="2.500" fill="#fff" />
        <path d="M10 7h5M10 10h5M4 13h10" stroke="#f7fbff" />
      </>
    ),
  },
  { id: "Chrome", open: true, art: null },
  {
    id: "Paint",
    art: (
      <>
        <path d="M2 10c0-5 6-7 10-5s3 5 0 5 0 5-4 6-6-2-6-6z" fill="#dfe6e4" />
        <circle cx="6" cy="8" r="1.300" fill="#d9534f" />
        <circle cx="10" cy="7" r="1.300" fill="#4b9be0" />
        <circle cx="5" cy="12" r="1.300" fill="#62b14a" />
        <path d="M10 12l6-10" stroke="#e09a3a" strokeWidth="2" />
      </>
    ),
  },
  {
    id: "Word",
    art: (
      <>
        <path d="M8 3h9v12H8z" fill="#eef3fb" />
        <path d="M10 6h6M10 8h6M10 10h6M10 12h6" stroke="#2b5797" />
        <path d="M1 2l9-1v16l-9-2z" fill="#2b5797" />
        <path d="M3 6l1 6 1.500-5L7 12l1-6" stroke="#fff" fill="none" />
      </>
    ),
  },
  {
    id: "Recorder",
    art: (
      <>
        <circle cx="9" cy="9" r="8" fill="#f3eef0" />
        <path d="M11 6a4 4 0 1 0 0 6V9H9" stroke="#c52a48" strokeWidth="1.300" fill="none" />
        <path d="M13 7v6" stroke="#c52a48" strokeWidth="1.300" />
      </>
    ),
  },
  {
    id: "Calculator",
    open: true,
    art: (
      <>
        <path d="M3 1h12v16H3z" fill="#7b96a6" />
        <path d="M4 2h10v4H4z" fill="#58c8dd" />
        <path d="M4 8h3v2H4zM8 8h2v2H8zM11 8h3v2h-3zM4 11h3v2H4zM8 11h2v2H8zM4 14h3v2H4zM8 14h2v2H8z" fill="#e5eef2" />
        <path d="M11 11h3v5h-3z" fill="#2687c8" />
      </>
    ),
  },
  {
    id: "Acrobat",
    open: true,
    art: (
      <>
        <rect x="1" y="1" width="16" height="16" rx="2" fill="#b30b12" />
        <path d="M4 13c4-2 5-6 4-9 1 5 4 7 6 7-4-1-7 0-10 2z" stroke="#fff" fill="none" strokeWidth="1.200" />
      </>
    ),
  },
  {
    id: "Maps",
    art: (
      <>
        <circle cx="9" cy="9" r="8" fill="#fff" />
        <path d="M5 8a4 4 0 0 1 8 0c0 3-3 4-4 8-1-4-4-5-4-8z" fill="#34a853" />
        <path d="M5 7a4 4 0 0 1 4-3l-1 4-2 2z" fill="#ea4335" />
        <path d="M9 4a4 4 0 0 1 4 3l-3 1z" fill="#4285f4" />
        <path d="M6 11l3-3 1 2-2 3z" fill="#fbbc04" />
        <circle cx="9" cy="8" r="1.500" fill="#fff" />
      </>
    ),
  },
  {
    id: "Edge",
    open: true,
    art: (
      <>
        <circle cx="9" cy="9" r="8" fill="#1773c4" />
        <path d="M1 9a8 8 0 0 1 16-1c0 3-3 4-6 3 2-4-3-6-6-4-2 1-4 3-4 2z" fill="#3fd0a8" />
        <path d="M7 9c-1 4 4 6 8 4-3 5-12 5-13-2 1-2 3-3 5-2z" fill="#0e4f9c" />
        <path d="M11 11c2 1 5 0 6-2v3l-2 1z" fill="#1c1e1b" />
      </>
    ),
  },
  { id: "CATIA", open: true, active: true, art: null },
];

function AppArt({ id, art }: { id: string; art: ReactNode }) {
  if (id === "WhatsApp") {
    return (
      <span className="flex h-4 w-4 items-center justify-center rounded-full bg-[#2cc64f]">
        <SiWhatsapp className="h-3 w-3 text-white" />
      </span>
    );
  }
  if (id === "Chrome") {
    return (
      <svg viewBox="0 0 18 18" className="h-[17px] w-[17px]">
        <circle cx="9" cy="9" r="8" fill="#fbc116" />
        <path d="M9 9L2 5a8 8 0 0 1 14 0z" fill="#e33b2e" />
        <path d="M9 9L2 5a8 8 0 0 0 5 12z" fill="#2ba24c" />
        <circle cx="9" cy="9" r="4" fill="#fff" />
        <circle cx="9" cy="9" r="3" fill="#3f7de8" />
        <circle cx="13" cy="13" r="4" fill="#e8f3ea" />
        <path d="M12 16v-5h2a1 1 0 0 1 0 3h-2" stroke="#2f8a46" fill="none" />
      </svg>
    );
  }
  if (id === "CATIA") return <AppLogo className="h-4 w-4 border border-[#ddd]" />;
  return (
    <svg viewBox="0 0 18 18" className="h-4 w-4">
      {art}
    </svg>
  );
}

function TaskBar() {
  return (
    <footer className="flex h-[27px] shrink-0 items-center overflow-hidden bg-[#20201e] font-['Lato','Open_Sans',sans-serif] text-[#f0f0f0]">
      <button aria-label="Start" className="flex h-full w-[27px] shrink-0 items-center justify-center pr-[6px]">
        <svg viewBox="0 0 12 12" className="h-[11px] w-[11px]">
          <path d="M0 1.500l5.500-.8v5H0zM6.200.6L12 0v5.700H6.200zM0 6.400h5.500v5L0 10.600zM6.200 6.400H12V12l-5.800-.7z" fill="#fff" />
        </svg>
      </button>
      <label className="flex h-full w-[193px] shrink-0 items-center gap-[7px] bg-[#f1f2fa] pl-2 text-[#333]">
        <Search className="h-3 w-3 -scale-x-100" />
        <input aria-label="Search" placeholder="Type here to search" className="w-[108px] bg-transparent text-[10px] placeholder:text-[#444]" />
        <svg viewBox="0 0 44 20" className="h-5 w-11 shrink-0">
          <path d="M18 1c1 5 3 7 8 8-5 1-7 3-8 8-1-5-3-7-8-8 5-1 7-3 8-8z" fill="#f5b921" />
          <path d="M33 7c.5 2.500 1.500 3.500 4 4-2.500.5-3.500 1.500-4 4-.5-2.500-1.500-3.500-4-4 2.500-.5 3.500-1.500 4-4z" fill="#f3c44b" />
          <path d="M5 11c.5 2 1 2.500 3 3-2 .5-2.500 1-3 3-.5-2-1-2.500-3-3 2-.5 2.500-1 3-3z" fill="#2c9ed4" />
          <circle cx="29" cy="2" r="1.500" fill="#d0463e" />
          <circle cx="41" cy="15" r="1" fill="#6fae7b" />
        </svg>
      </label>
      <nav className="flex h-full shrink-0">
        {APPS.map((app) => (
          <button key={app.id} aria-label={app.id} className={`relative flex h-full w-[33px] items-center justify-center ${app.active ? "bg-[#4a4a49]" : ""}`}>
            <AppArt id={app.id} art={app.art} />
            {app.open && <span className={`absolute bottom-0 h-[2px] bg-[#f4cba6] ${app.active ? "w-full" : "w-[26px]"}`} />}
          </button>
        ))}
      </nav>
      <div className="ml-auto flex shrink-0 items-center">
        <svg viewBox="0 0 18 18" className="mr-1 h-4 w-4">
          <circle cx="8" cy="10" r="7" fill="#f39a2c" />
          <path d="M6 16a3 3 0 0 1 1-5 4 4 0 0 1 7 1 2.500 2.500 0 0 1 0 4z" fill="#dbe5f5" />
          <circle cx="13" cy="4" r="4" fill="#d53327" />
          <text x="11" y="7" className="fill-white text-[7px]">6</text>
        </svg>
        <span className="w-[26px] text-[10px]">30°C</span>
        <span className="w-[70px] text-[10px] whitespace-nowrap">Mostly sunny</span>
        <ChevronUp className="mr-[6px] h-[10px] w-[10px]" />
        <svg viewBox="0 0 12 12" className="mr-1 h-3 w-3" fill="none" stroke="#eee">
          <path d="M3 2h8v6H3M1 1v4h2M2 5v5h7M7 8v2" />
        </svg>
        <svg viewBox="0 0 12 12" className="mr-1 h-3 w-3" fill="none" stroke="#eee">
          <path d="M2 4h6v5H2zM8 6l2-1v4l-2-1M3 1.500h4M3 11.500h4" />
        </svg>
        <svg viewBox="0 0 12 12" className="mr-[6px] h-3 w-3" fill="none" stroke="#eee">
          <path d="M1 4.500h2L6 2v8L3 7.500H1zM8 4l3 4M11 4L8 8" />
        </svg>
        <span className="w-6 text-[9px]">ENG</span>
        <div className="w-10 text-center text-[8px] leading-3">
          <div>14:41</div>
          <div className="whitespace-nowrap">23-02-2026</div>
        </div>
        <svg viewBox="0 0 18 18" className="mr-[6px] ml-3 h-[18px] w-[18px]">
          <path d="M1 2h12v10H6l-2 2v-2H1z" fill="#fff" />
          <path d="M3 5h8M3 7.500h8" stroke="#20201e" />
          <circle cx="12" cy="12" r="5" fill="#3a3a3a" stroke="#999" />
          <text x="10" y="15" className="fill-white text-[8px]">1</text>
        </svg>
      </div>
    </footer>
  );
}

export default function App() {
  return (
    <div className="flex h-screen flex-col overflow-hidden bg-[#cdcbeb] font-['Open_Sans','Noto_Sans',sans-serif] text-[#1c1c28]">
      <header className="flex h-[21px] shrink-0 items-center border-t border-[#777] bg-white pl-[6px] text-[8px]">
        <AppLogo className="mr-[5px] h-[9px] w-[9px]" />
        <h1>CATIA V5 - [17]</h1>
        <div className="ml-auto flex gap-[22px] pr-[11px]">
          <button aria-label="Minimize">
            <Minus className="h-[9px] w-[9px]" />
          </button>
          <button aria-label="Maximize">
            <Square className="h-[9px] w-[9px]" />
          </button>
          <button aria-label="Close">
            <X className="h-[10px] w-[10px]" />
          </button>
        </div>
      </header>

      <nav className="flex h-[13px] shrink-0 items-center text-[8px] leading-[13px]">
        <AppLogo className="ml-[2px] h-[10px] w-[12px]" />
        <button className="h-full w-[31px] bg-[#fde4c4] pl-1 text-left">
          <span className="underline">S</span>tart
        </button>
        <button className="w-[65px] pl-[6px] text-left whitespace-nowrap">ENOVIA V5 VPM</button>
        {MENU.map((item) => (
          <button key={item} className="pr-[7px] pl-2">
            <span className="underline">{item[0]}</span>
            {item.slice(1)}
          </button>
        ))}
        <div className="ml-auto flex h-full items-center gap-[5px] bg-white px-1 text-[#555]">
          <Minus className="h-2 w-2" />
          <svg viewBox="0 0 8 8" className="h-2 w-2" fill="none" stroke="#555">
            <path d="M2.500 3V1.500h4v3H5M1.500 3.500h3v3h-3z" />
          </svg>
          <X className="h-2 w-2" />
        </div>
      </nav>

      <div className="flex h-6 shrink-0 items-center overflow-hidden border-t-2 border-b-2 border-t-[#f2f1fc] border-b-[#6f6d8c] bg-linear-to-b from-[#dddbf4] to-[#c9c7e6]">
        <div className="flex w-[408px] shrink-0 items-center gap-[3px] self-stretch pl-[3px]">
          <Handle />
          <Picker label="Fill colour" value="Automatic" className="w-[42px] bg-white" />
          <Picker label="Transparency" value="Auto" className="w-[42px] bg-[#dddde9]" />
          <Picker label="Line weight" value="Auto" className="w-[42px] bg-white" />
          <Picker label="Line type" value="Auto" className="w-[42px] bg-white" />
          <Picker label="Point symbol" value="Auto" className="w-7 bg-white" />
          <Picker label="Rendering" value="Auto" className="w-[26px] bg-[#d4d2ec] text-[#9a99b0]" />
          <Picker label="Layer" value="None" className="w-[42px] bg-white" />
          <div className="flex">
            <Tools ids="brush wizard" />
          </div>
        </div>
        <Handle />
        <Tools ids="pad+ pocket+ shaft groove hole rib slot solid+ loft loftCut" />
        <div className="w-[6px]" />
        <Handle />
        <Tools ids="translate+" />
        <Divider />
        <Tools ids="mirror pattern+" />
        <Divider />
        <Tools ids="scale+" />
        <div className="w-6" />
        <Handle />
        <Tools ids="fillet+ chamfer draft+ shell thickness thread replace+" />
        <div className="w-9" />
        <Handle />
        <Tools ids="sketch+" />
      </div>

      <div className="flex min-h-0 flex-1">
        <main className="relative min-w-0 flex-1 overflow-hidden bg-linear-to-b from-[#322f62] via-[#48436f] via-68% to-[#a3a3b8]">
          <Model />
          <SpecTree />
          <Palette title="Reference E..." ids="point line plane" className="top-4 right-[251px] w-[67px]" />
          <Compass />
          <TouchPads />
          <Palette title="A.." ids="axisBox" className="top-[445px] right-[145px] w-[30px]" />
          <Palette title="R.." ids="camera" className="top-[445px] right-[102px] w-[30px]" />
          <div className="absolute right-1 bottom-2 flex items-end gap-2">
            <p className="font-['Liberation_Sans',sans-serif] text-[21px] leading-8 whitespace-nowrap text-[#d0021b]">Learn Engineering Tutorials</p>
            <svg viewBox="0 0 28 28" className="h-7 w-7" fill="none" stroke="#d6d6e2">
              <path d="M15 9L12 19L6 23M12 19L23 23M13 3h4l-4 5h4M5 21l4 4M9 21l-4 4M22 20l2 3M27 20l-4 6" />
            </svg>
          </div>
        </main>
        <SideBar />
      </div>

      <BottomTools />

      <div className="flex h-[15px] shrink-0 items-center gap-[2px] pr-[2px] pl-[2px] text-[8px]">
        <span className="mr-auto">Select an object or a command</span>
        <input aria-label="Power input" className="h-[13px] w-[201px] border border-[#8a88a3] bg-white" />
        <button aria-label="Dialog" className="flex h-[13px] w-[21px] items-center justify-center border border-[#a9a7c4]">
          <span className="h-[6px] w-2 border border-[#9a98b5]" />
        </button>
        <button aria-label="Run" className="flex h-[13px] w-[21px] items-center justify-center border border-[#a9a7c4]">
          <span className="h-2 w-2 rounded-full border border-[#9a98b5]" />
        </button>
      </div>
      <div className="h-[6px] shrink-0 bg-[#14140f]" />
      <TaskBar />
    </div>
  );
}
